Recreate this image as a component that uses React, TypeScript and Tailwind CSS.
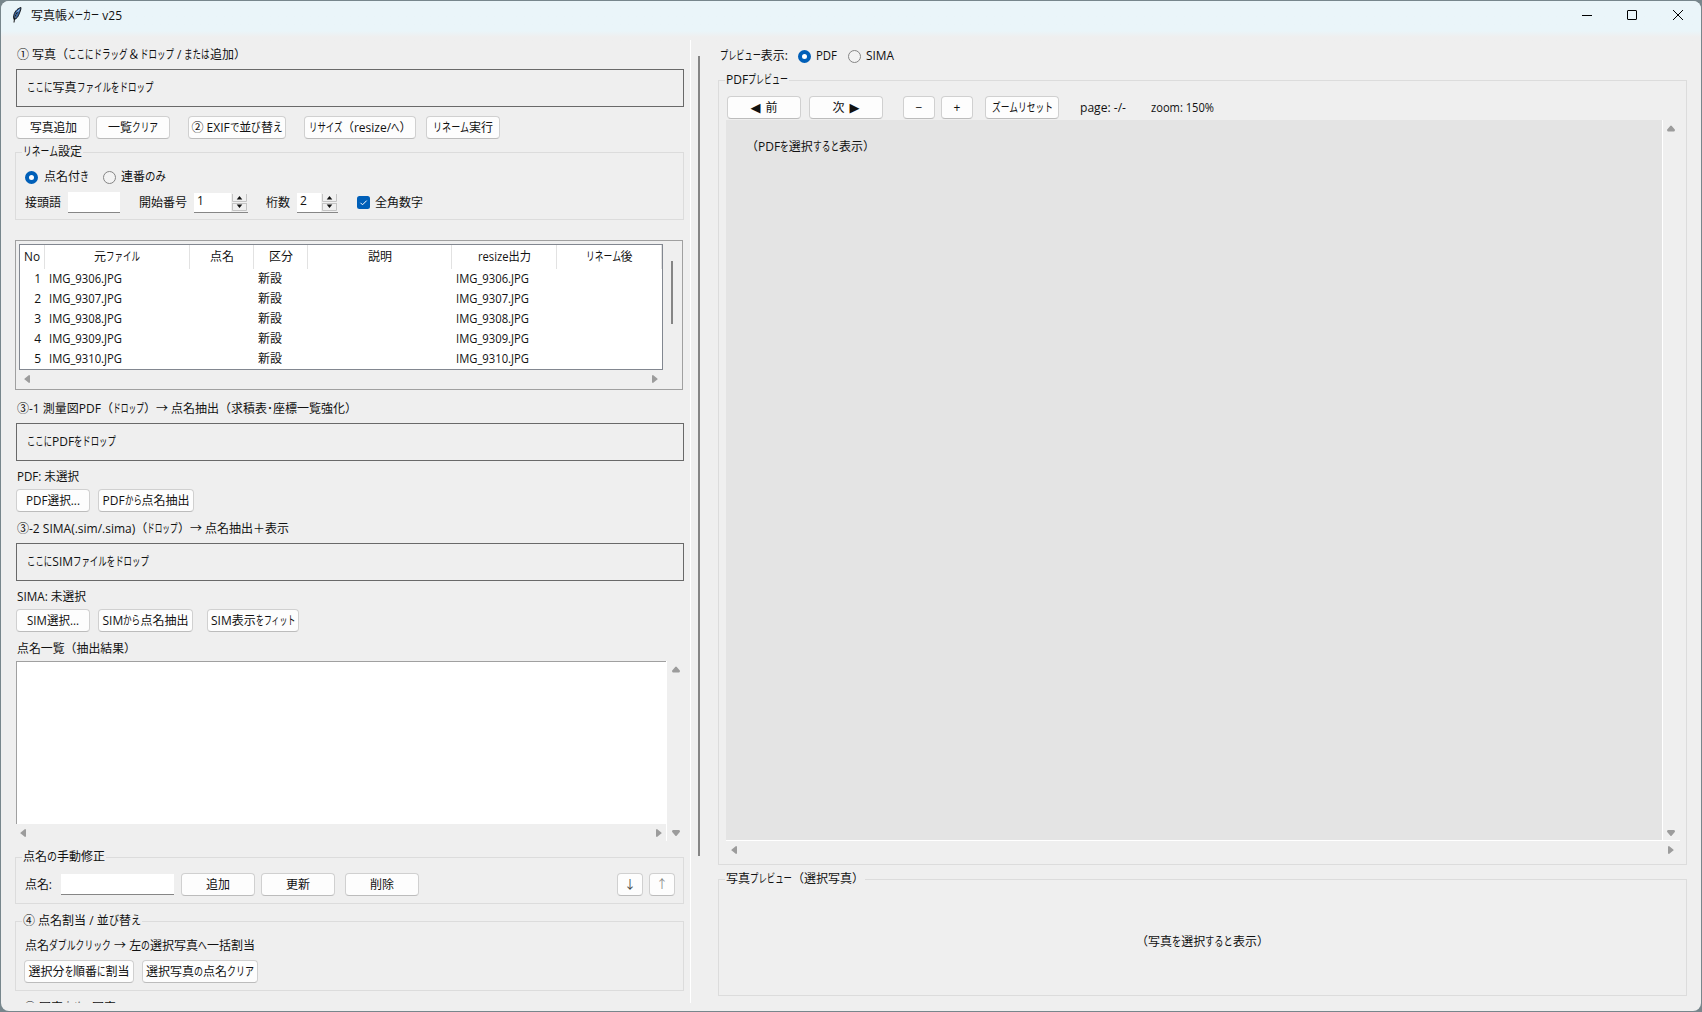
import { useLayoutEffect, useRef, type ReactNode } from 'react';

const KANA = /([ぁ-んァ-ヶー]+)/;

/* UI label: kana are set condensed so that the whole label is `w` pixels wide */
function T({ children, w, className = '' }: { children: string; w?: number; className?: string }) {
  const ref = useRef<HTMLSpanElement>(null);
  const hasKana = KANA.test(children);
  const runs = hasKana ? children.split(KANA).filter(Boolean) : [children];

  useLayoutEffect(() => {
    const el = ref.current;
    if (!el || !w) return;
    const fit = Array.from(el.querySelectorAll<HTMLElement>('[data-fit]'));
    fit.forEach((f) => {
      f.style.width = '';
      (f.firstElementChild as HTMLElement).style.transform = '';
    });
    const total = el.getBoundingClientRect().width;
    const widths = fit.map((f) => f.getBoundingClientRect().width);
    const sum = widths.reduce((a, b) => a + b, 0);
    const k = (w - (total - sum)) / sum;
    fit.forEach((f, i) => {
      f.style.width = `${widths[i] * k}px`;
      (f.firstElementChild as HTMLElement).style.transform = `scaleX(${k})`;
    });
  }, [w, children]);

  return (
    <span ref={ref} className={`inline-flex shrink-0 self-start whitespace-pre ${className}`}>
      {runs.map((r, i) =>
        !hasKana || KANA.test(r) ? (
          <span key={i} data-fit className="inline-block">
            <span className="inline-block origin-left">{r}</span>
          </span>
        ) : (
          <span key={i}>{r}</span>
        ),
      )}
    </span>
  );
}

function Btn({ children, className = 'w-[74px]' }: { children: ReactNode; className?: string }) {
  return (
    <button
      className={`flex h-[23px] shrink-0 justify-center rounded-[4px] border border-[#d0d0d0] border-b-[#bcbcbc] bg-[#fdfdfd] pt-[3px] ${className}`}
    >
      {children}
    </button>
  );
}

function DropBox({ children }: { children: ReactNode }) {
  return (
    <div className="h-[38px] w-[668px] border border-[#696969] pt-[10px] pl-[10px]">
      {children}
    </div>
  );
}

function Radio({ checked }: { checked?: boolean }) {
  return checked ? (
    <span className="size-[13px] shrink-0 rounded-full border-4 border-[#005fb8] bg-white" />
  ) : (
    <span className="size-[13px] shrink-0 rounded-full border border-[#858585] bg-[#f3f3f3]" />
  );
}

function Arrow({ dir, className = '' }: { dir: 'up' | 'down' | 'left' | 'right'; className?: string }) {
  const d = {
    up: 'M3.2 1 Q4 0 4.8 1 L8 4.8 Q8 6.5 7 6.5 H1 Q0 6.5 0 4.8Z',
    down: 'M3.2 5.5 Q4 6.5 4.8 5.5 L8 1.7 Q8 0 7 0 H1 Q0 0 0 1.7Z',
    left: 'M1 3.2 Q-.3 4 1 4.8 L5 8 Q6 8 6 7 V1 Q6 0 5 0Z',
    right: 'M5 3.2 Q6.3 4 5 4.8 L1 8 Q0 8 0 7 V1 Q0 0 1 0Z',
  }[dir];
  const vertical = dir === 'up' || dir === 'down';
  return (
    <svg
      width={vertical ? 8 : 6}
      height={vertical ? 7 : 8}
      viewBox={vertical ? '0 0 8 7' : '0 0 6 8'}
      className={`shrink-0 ${className}`}
    >
      <path d={d} fill="#9c9c9c" />
    </svg>
  );
}

function Spin({ value, className }: { value: string; className: string }) {
  return (
    <div className={`flex h-[20px] shrink-0 border-b border-[#868686] bg-white pl-[3px] ${className}`}>
      <span className="grow leading-[16px]">{value}</span>
      <svg width="17" height="19" viewBox="0 0 17 19">
        <rect width="17" height="19" fill="#f0f0f0" />
        <path d="M1.5 1 V8.5 H15.5 V1 M1.5 10 V17.5 H15.5 V10 M1.5 10.5 H15.5" fill="none" stroke="#c4c4c4" />
        <path d="M8.5 3 L11.3 6.5 H5.7Z M8.5 15 L11.3 11.5 H5.7Z" fill="#111" />
      </svg>
    </div>
  );
}

const columns = [
  { label: 'No', w: 16, cls: 'w-[25px]' },
  { label: '元ファイル', w: 46, cls: 'w-[145px]' },
  { label: '点名', w: 24, cls: 'w-[64px]' },
  { label: '区分', w: 24, cls: 'w-[54px]' },
  { label: '説明', w: 24, cls: 'w-[144px]' },
  { label: 'resize出力', w: 53, cls: 'w-[105px]' },
  { label: 'リネーム後', w: 47, cls: 'w-[105px]' },
];

const files = ['IMG_9306.JPG', 'IMG_9307.JPG', 'IMG_9308.JPG', 'IMG_9309.JPG', 'IMG_9310.JPG'];

function FileTable() {
  return (
    <div className="ml-[-1px] flex h-[150px] w-[668px] border border-[#a0a0a0] p-[3px]">
      <div className="w-[644px] shrink-0">
        <div className="h-[126px] overflow-hidden border border-[#828790] bg-white">
          <div className="flex h-[24px]">
            {columns.map((c) => (
              <div key={c.label} className={`flex shrink-0 justify-center border-r border-[#e2e2e2] pt-[4px] ${c.cls}`}>
                <T w={c.w}>{c.label}</T>
              </div>
            ))}
          </div>
          {files.map((f, i) => (
            <div key={f} className="flex h-[20px] pt-[2px]">
              <span className="w-[21px] text-right">{i + 1}</span>
              <span className="w-[217px] pl-[8px]"><T w={73}>{f}</T></span>
              <span className="w-[198px]">新設</span>
              <T w={73}>{f}</T>
            </div>
          ))}
        </div>
        <div className="flex h-[17px] items-center justify-between pr-[5px] pl-[5px]">
          <Arrow dir="left" />
          <Arrow dir="right" />
        </div>
      </div>
      <div className="mt-[17px] ml-[8px] h-[63px] w-[2px] bg-[#858585]" />
    </div>
  );
}

function Group({ title, w, className, children }: { title: string; w: number; className: string; children?: ReactNode }) {
  return (
    <fieldset className={`min-w-0 shrink-0 border border-[#dcdcdc] ${className}`}>
      <legend className="ml-[6px] h-4 px-px">
        <T w={w}>{title}</T>
      </legend>
      {children}
    </fieldset>
  );
}

function LeftPane() {
  return (
    <div className="flex h-[963px] w-[690px] shrink-0 flex-col overflow-hidden border-r border-white pt-[7px] pl-[15px]">
      <T w={229} className="ml-px h-4">① 写真（ここにドラッグ＆ドロップ / または追加）</T>
      <div className="mt-[6px]"><DropBox><T w={126}>ここに写真ファイルをドロップ</T></DropBox></div>
      <div className="mt-[9px] flex">
        <Btn><T w={47}>写真追加</T></Btn>
        <Btn className="ml-[6px] w-[74px]"><T w={50}>一覧クリア</T></Btn>
        <Btn className="ml-[18px] w-[98px]"><T w={91}>② EXIFで並び替え</T></Btn>
        <Btn className="ml-[18px] w-[112px]"><T w={103}>リサイズ（resize/へ）</T></Btn>
        <Btn className="ml-[10px] w-[74px]"><T w={60}>リネーム実行</T></Btn>
      </div>
      <Group title="リネーム設定" w={59} className="mt-[5px] ml-[-1px] h-[76px] w-[669px]">
        <div className="mt-[9px] flex h-4 items-center pl-[9px]">
          <Radio checked />
          <T w={45} className="ml-[6px]">点名付き</T>
          <span className="w-[14px]" />
          <Radio />
          <T w={45} className="ml-[5px]">連番のみ</T>
        </div>
        <div className="mt-[7px] flex h-[21px] items-center pl-[9px]">
          <T w={36} className="mt-[3px]">接頭語</T>
          <input className="ml-[7px] h-[21px] w-[52px] border-b border-[#868686] bg-white" />
          <T w={48} className="mt-[3px] ml-[19px]">開始番号</T>
          <Spin value="1" className="ml-[7px] w-[54px]" />
          <T w={24} className="mt-[3px] ml-[18px]">桁数</T>
          <Spin value="2" className="ml-[7px] w-[41px]" />
          <svg width="13" height="13" viewBox="0 0 13 13" className="ml-[19px] shrink-0">
            <rect width="13" height="13" rx="2.5" fill="#005fb8" />
            <path d="M3.5 6.8 L5.5 8.8 L9.7 4.6" fill="none" stroke="#fff" />
          </svg>
          <T w={48} className="mt-[3px] ml-[5px]">全角数字</T>
        </div>
      </Group>
      <div className="mt-[20px]"><FileTable /></div>

      <T w={340} className="mt-[11px] ml-px h-4">③-1 測量図PDF（ドロップ）→ 点名抽出（求積表･座標一覧強化）</T>
      <div className="mt-[6px]"><DropBox><T w={89}>ここにPDFをドロップ</T></DropBox></div>
      <T w={62} className="mt-[8px] ml-px h-4">PDF: 未選択</T>
      <div className="mt-[4px] flex">
        <Btn><T w={54}>PDF選択...</T></Btn>
        <Btn className="ml-[8px] w-[96px]"><T w={87}>PDFから点名抽出</T></Btn>
      </div>
      <T w={272} className="mt-[9px] ml-px h-4">③-2 SIMA(.sim/.sima)（ドロップ）→ 点名抽出＋表示</T>
      <div className="mt-[6px]"><DropBox><T w={122}>ここにSIMファイルをドロップ</T></DropBox></div>
      <T w={69} className="mt-[8px] ml-px h-4">SIMA: 未選択</T>
      <div className="mt-[4px] flex">
        <Btn><T w={52}>SIM選択...</T></Btn>
        <Btn className="ml-[8px] w-[95px]"><T w={86}>SIMから点名抽出</T></Btn>
        <Btn className="ml-[14px] w-[92px]"><T w={84}>SIM表示をフィット</T></Btn>
      </div>
      <T w={119} className="mt-[9px] ml-px h-4">点名一覧（抽出結果）</T>
      <div className="mt-[4px] flex">
        <div className="w-[651px] border-r border-white">
          <div className="h-[163px] border-t border-l border-[#a0a0a0] bg-white" />
          <div className="flex h-[17px] items-center justify-between px-[4px]">
            <Arrow dir="left" />
            <Arrow dir="right" />
          </div>
        </div>
        <div className="ml-[5px] flex flex-col justify-between pt-[5px] pb-[4px]">
          <Arrow dir="up" />
          <Arrow dir="down" />
        </div>
      </div>

      <Group title="点名の手動修正" w={82} className="mt-[8px] ml-[-1px] h-[55px] w-[669px]">
        <div className="mt-[8px] flex h-[23px] items-center pl-[9px]">
          <T w={27} className="mt-[4px]">点名:</T>
          <input className="ml-[9px] h-[21px] w-[113px] border-b border-[#868686] bg-white" />
          <Btn className="ml-[7px] w-[74px]">追加</Btn>
          <Btn className="ml-[6px] w-[74px]">更新</Btn>
          <Btn className="ml-[10px] w-[74px]">削除</Btn>
          <Btn className="ml-[198px] w-[26px]"><span className="text-[#444]">↓</span></Btn>
          <Btn className="ml-[6px] w-[26px]"><span className="text-[#888]">↑</span></Btn>
        </div>
      </Group>
      <Group title="④ 点名割当 / 並び替え" w={118} className="mt-[9px] ml-[-1px] h-[78px] w-[669px]">
        <div className="mt-[9px] ml-[9px] flex h-4"><T w={230}>点名ダブルクリック → 左の選択写真へ一括割当</T></div>
        <div className="mt-[6px] flex pl-[8px]">
          <Btn className="w-[110px]"><T w={101}>選択分を順番に割当</T></Btn>
          <Btn className="ml-[8px] w-[116px]"><T w={108}>選択写真の点名クリア</T></Btn>
        </div>
      </Group>
      <T w={92} className="mt-[9px] ml-[8px] h-4">⑤ 写真プレビュー写真</T>
    </div>
  );
}

function RightPane() {
  return (
    <div className="w-[970px] shrink-0 pt-[15px]">
      <div className="flex h-4 items-center pl-[2px]">
        <T w={68}>プレビュー表示:</T>
        <span className="w-[10px]" />
        <Radio checked />
        <T w={21} className="ml-[5px]">PDF</T>
        <span className="w-[11px]" />
        <Radio />
        <T w={28} className="ml-[5px]">SIMA</T>
      </div>
      <Group title="PDFプレビュー" w={62} className="mt-[8px] h-[793px] w-[969px]">
        <div className="mt-[8px] flex h-[23px] items-center pl-[8px]">
          <Btn><span className="mr-[5px] font-['DejaVu_Sans'] text-[13px]">◀</span>前</Btn>
          <Btn className="ml-[8px] w-[74px]">次<span className="ml-[5px] font-['DejaVu_Sans'] text-[13px]">▶</span></Btn>
          <Btn className="ml-[20px] w-[32px]">−</Btn>
          <Btn className="ml-[6px] w-[32px]">+</Btn>
          <Btn className="ml-[12px] w-[74px]"><T w={61}>ズームリセット</T></Btn>
          <T w={46} className="mt-[4px] ml-[21px]">page: -/-</T>
          <T w={63} className="mt-[4px] ml-[25px]">zoom: 150%</T>
        </div>
        <div className="ml-[7px] flex h-[722px] w-[954px] border-b border-white">
          <div className="mt-px w-[937px] border-r border-white bg-[#e4e4e4] pt-[19px] pl-[20px]">
            <T w={129}>（PDFを選択すると表示）</T>
          </div>
          <div className="ml-[4px] flex flex-col justify-between pt-[6px] pb-[3px]">
            <Arrow dir="up" />
            <Arrow dir="down" />
          </div>
        </div>
        <div className="ml-[7px] flex h-[17px] w-[953px] items-center justify-between px-[5px]">
          <Arrow dir="left" />
          <Arrow dir="right" />
        </div>
      </Group>
      <Group title="写真プレビュー（選択写真）" w={138} className="mt-[6px] h-[125px] w-[969px]">
        <div className="flex justify-center pt-[47px]">
          <T w={133}>（写真を選択すると表示）</T>
        </div>
      </Group>
    </div>
  );
}

export default function App() {
  return (
    <div className="h-[1012px] w-[1702px] overflow-hidden bg-[#77868c] p-px font-['Open_Sans','Noto_Sans_CJK_JP',sans-serif] text-[12px] leading-4 text-[#111]">
      <div className="h-[1010px] w-[1700px] overflow-hidden rounded-[8px] bg-[#efefef]">
        <header className="flex h-[40px] items-start bg-gradient-to-b from-[#eaf5f9] from-75% to-[#efefef] to-90%">
          <svg width="10" height="16" viewBox="0 0 10 16" className="mt-[6px] ml-[11px]">
            <path d="M9 .5 C5 1.5 2 5 1.5 10 L2 12.5 C5 12 6.5 9 7.5 6 C8.5 4 9 2 9 .5Z" fill="#3465a4" stroke="#111" strokeWidth=".9" />
            <path d="M7.5 2.5 C5 5 3.5 8 3 11" fill="none" stroke="#b8d4f0" />
            <path d="M5.5 5 C3.5 8 2.3 11 2 15.5" fill="none" stroke="#111" />
          </svg>
          <T w={91} className="mt-[7px] ml-[9px]">写真帳メーカー v25</T>
          <svg width="110" height="16" viewBox="0 0 110 16" className="mt-[6px] mr-[15px] ml-auto" fill="none" stroke="#000">
            <path d="M6 8.5 H16" />
            <rect x="51.5" y="3.5" width="9" height="9" rx=".5" />
            <path d="M97 3 L107 13 M107 3 L97 13" />
          </svg>
        </header>
        <div className="flex">
          <div className="mt-[-1px] flex"><LeftPane /></div>
          <div className="mt-[15px] mr-[18px] ml-[7px] h-[800px] w-[2px] bg-[#858585]" />
          <div className="mt-[-8px]"><RightPane /></div>
        </div>
      </div>
    </div>
  );
}
